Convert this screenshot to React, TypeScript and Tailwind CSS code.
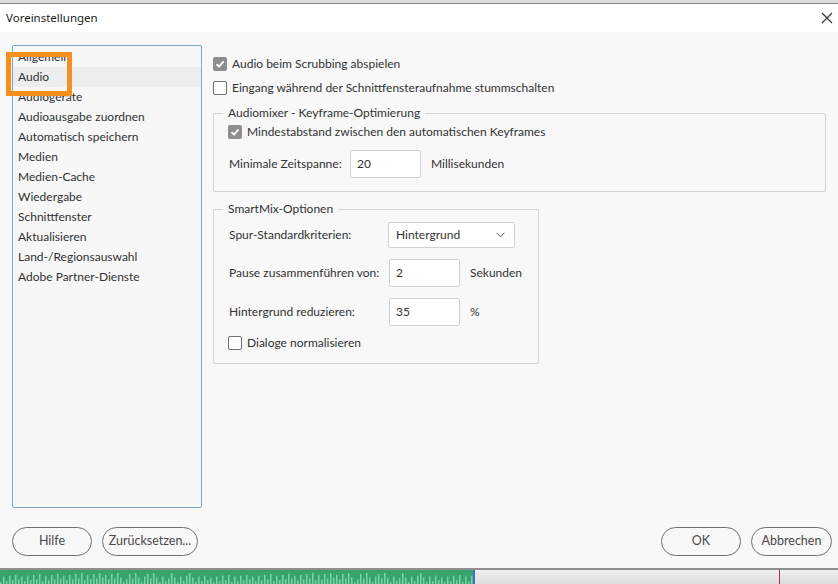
import React from 'react';

const categories = [
  'Allgemein',
  'Audio',
  'Audiogeräte',
  'Audioausgabe zuordnen',
  'Automatisch speichern',
  'Medien',
  'Medien-Cache',
  'Wiedergabe',
  'Schnittfenster',
  'Aktualisieren',
  'Land-/Regionsauswahl',
  'Adobe Partner-Dienste',
];

const font = { fontFamily: 'Lato, "Open Sans", sans-serif' };

function Checkbox({ checked, label }: { checked?: boolean; label: string }) {
  return (
    <div className="flex h-[18px] items-center gap-[5px] whitespace-nowrap">
      {checked ? (
        <span className="flex h-[14px] w-[14px] shrink-0 items-center justify-center rounded-[2px] bg-[#8e8e8e]">
          <svg width="10" height="10" viewBox="0 0 10 10">
            <path d="M1.5 5.2 L4 7.6 L8.6 2.4" fill="none" stroke="#fff" strokeWidth="1.8" />
          </svg>
        </span>
      ) : (
        <span className="h-[14px] w-[14px] shrink-0 rounded-[2px] border border-[#6f6f6f] bg-white" />
      )}
      <span>{label}</span>
    </div>
  );
}

function Field({ value }: { value: string }) {
  return (
    <div className="flex h-[28px] w-[71px] shrink-0 items-center rounded-[2px] border border-[#d2d2d2] bg-white pl-[6px]">
      {value}
    </div>
  );
}

function Button({ label, w }: { label: string; w: string }) {
  return (
    <button
      className={`flex h-[29px] ${w} items-center justify-center rounded-full border border-[#6f6f6f] text-[12.5px] text-[#4a4a4a]`}
    >
      {label}
    </button>
  );
}

// simple pseudo-random peaks for the timeline clip
const peaks = Array.from({ length: 158 }, (_, i) => 2 + ((i * 37 + (i % 7) * 13) % 11) * 0.9);

export default function App() {
  return (
    <div className="flex h-[584px] w-[838px] flex-col overflow-hidden bg-[#f2f2f2] text-[12px] text-[#323232]" style={font}>
      <div className="h-[3px] bg-[#dcdcdc]" />
      <div className="h-[1px] bg-[#8a8a8a]" />

      {/* title bar */}
      <div className="flex h-[28px] items-center justify-between bg-white pl-[6px] pr-[3px]">
        <span className="text-[11.5px] text-[#1a1a1a]" style={{ fontFamily: '"Noto Sans", sans-serif' }}>
          Voreinstellungen
        </span>
        <svg width="12" height="12" viewBox="0 0 12 12" className="mr-[2px]">
          <path d="M1 1 L11 11 M11 1 L1 11" stroke="#333" strokeWidth="1.1" />
        </svg>
      </div>

      {/* body */}
      <div className="relative flex h-[536px] flex-col bg-[#f8f8f9] pl-[12px] pr-[6px] pt-[13px] pb-[12px]">
        <div className="flex h-[463px] gap-[11px]">
          {/* category list */}
          <div className="w-[190px] shrink-0 overflow-hidden rounded-[2px] border-[1.5px] border-[#80a8c6] bg-[#f7f7f7] pt-[1px]">
            {categories.map((c) => (
              <div
                key={c}
                className={`flex h-[20px] items-center whitespace-nowrap pl-[5px] ${c === 'Audio' ? 'bg-[#ededed]' : ''}`}
              >
                {c}
              </div>
            ))}
          </div>

          {/* settings */}
          <div className="flex flex-1 flex-col pt-[10px]">
            <Checkbox checked label="Audio beim Scrubbing abspielen" />
            <div className="mt-[6px]">
              <Checkbox label="Eingang während der Schnittfensteraufnahme stummschalten" />
            </div>

            <fieldset className="mt-[8px] w-[613px] rounded-[2px] border border-[#d3d3d3] px-[14px] pb-[13px]">
              <legend className="ml-[-5px] h-[16px] px-[5px] leading-[16px]">Audiomixer - Keyframe-Optimierung</legend>
              <div className="mt-[2px]">
                <Checkbox checked label="Mindestabstand zwischen den automatischen Keyframes" />
              </div>
              <div className="mt-[9px] flex items-center whitespace-nowrap">
                <span className="w-[122px] shrink-0 pl-[1px]">Minimale Zeitspanne:</span>
                <Field value="20" />
                <span className="ml-[10px]">Millisekunden</span>
              </div>
            </fieldset>

            <fieldset className="mt-[9px] w-[326px] rounded-[2px] border border-[#d3d3d3] px-[14px] pb-[11px]">
              <legend className="ml-[-5px] h-[16px] px-[5px] leading-[16px]">SmartMix-Optionen</legend>
              <div className="mt-[5px] flex items-center whitespace-nowrap">
                <span className="w-[160px] shrink-0 pl-[1px]">Spur-Standardkriterien:</span>
                <div className="flex h-[26px] w-[127px] items-center justify-between rounded-[2px] border border-[#d2d2d2] bg-white pl-[7px] pr-[9px]">
                  <span>Hintergrund</span>
                  <svg width="9" height="6" viewBox="0 0 9 6">
                    <path d="M0.5 0.8 L4.5 4.8 L8.5 0.8" fill="none" stroke="#555" strokeWidth="1" />
                  </svg>
                </div>
              </div>
              <div className="mt-[11px] flex items-center whitespace-nowrap">
                <span className="w-[161px] shrink-0 pl-[1px]">Pause zusammenführen von:</span>
                <Field value="2" />
                <span className="ml-[10px]">Sekunden</span>
              </div>
              <div className="mt-[11px] flex items-center whitespace-nowrap">
                <span className="w-[161px] shrink-0 pl-[1px]">Hintergrund reduzieren:</span>
                <Field value="35" />
                <span className="ml-[10px]">%</span>
              </div>
              <div className="mt-[8px]">
                <Checkbox label="Dialoge normalisieren" />
              </div>
            </fieldset>
          </div>
        </div>

        {/* buttons */}
        <div className="mt-[19px] flex items-center justify-between">
          <div className="flex gap-[10px]">
            <Button label="Hilfe" w="w-[80px]" />
            <Button label="Zurücksetzen..." w="w-[96px]" />
          </div>
          <div className="flex gap-[10px]">
            <Button label="OK" w="w-[80px]" />
            <Button label="Abbrechen" w="w-[81px]" />
          </div>
        </div>

        {/* orange highlight marker */}
        <div className="absolute left-[6px] top-[20px] h-[44px] w-[66px] border-[5px] border-[#f5901f]" />
      </div>

      {/* timeline behind the dialog */}
      <div className="h-[2px] bg-[#8f8f8f]" />
      <div className="flex h-[14px] bg-gradient-to-b from-[#f0f0f0] to-[#dcdcdc]">
        <svg width="473" height="14" viewBox="0 0 473 14" className="shrink-0">
          <rect width="473" height="14" fill="#38a46c" />
          {peaks.map((h, i) => (
            <rect key={i} x={i * 3} y={14 - h} width="1.5" height={h} fill="#7ad4a4" />
          ))}
        </svg>
        <div className="w-[2px] bg-[#3a6fd6]" />
        <div className="ml-[304px] w-[1px] bg-[#b03040]" />
      </div>
    </div>
  );
}
